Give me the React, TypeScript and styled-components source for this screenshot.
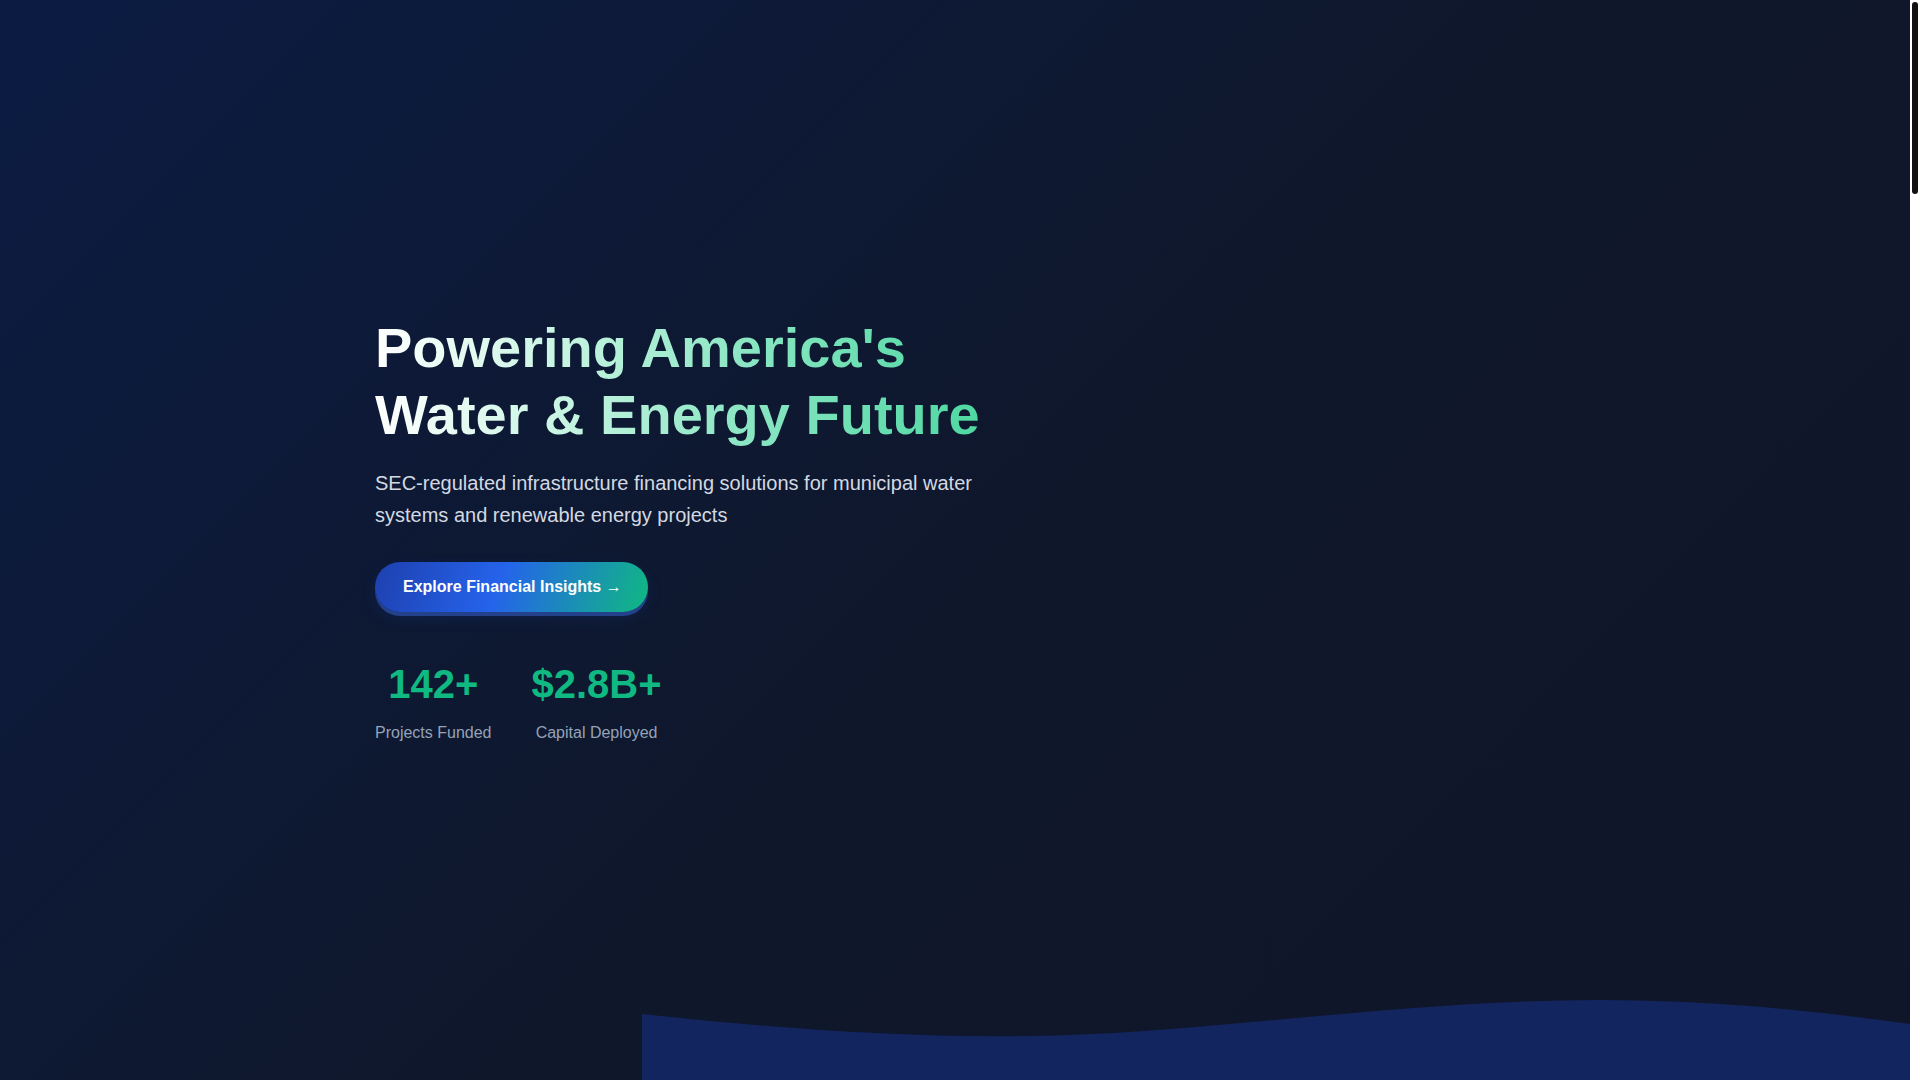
import styled, { createGlobalStyle } from "styled-components";

const GlobalStyle = createGlobalStyle`
  * {
    box-sizing: border-box;
  }

  html,
  body {
    margin: 0;
    padding: 0;
    height: 100%;
    overflow: hidden;
    background: #0f172a;
    font-family: "Liberation Sans", Arial, sans-serif;
  }
`;

// Main scroll area + a slim drawn scroll rail beside it
const Viewport = styled.div`
  display: flex;
  height: 100vh;
`;

const Main = styled.main`
  flex: 1;
  min-width: 0;
  overflow-y: auto;
  scrollbar-width: none;

  &::-webkit-scrollbar {
    display: none;
  }
`;

const ScrollRail = styled.div`
  width: 10px;
  flex-shrink: 0;
  padding: 2px;
  background: #ffffff;
`;

const ScrollThumb = styled.div`
  height: 192px;
  border-radius: 3px;
  background: #111111;
`;

const Hero = styled.section`
  position: relative;
  height: 100vh;
  display: flex;
  align-items: center;
  padding-bottom: 21px;
  overflow: hidden;
  background: linear-gradient(135deg, #0b1b42 0%, #0f172a 55%, #10162a 100%);
`;

const Container = styled.div`
  width: 100%;
  max-width: 1200px;
  margin: 0 auto;
  padding: 0 20px;
  position: relative;
  z-index: 1;
`;

const Content = styled.div`
  display: flex;
  flex-direction: column;
  align-items: flex-start;
`;

const Title = styled.h1`
  margin: 0 0 19px;
  font-size: 3.5rem;
  font-weight: 700;
  line-height: 1.2;
  background: linear-gradient(90deg, #ffffff 0%, #c9f5e3 30%, #8ce6c4 60%, #4fd8a2 100%);
  -webkit-background-clip: text;
  background-clip: text;
  color: transparent;
`;

const Subtitle = styled.p`
  margin: 0 0 31px;
  max-width: 600px;
  font-size: 1.25rem;
  line-height: 1.6;
  color: #d3d9e2;
`;

const CtaButton = styled.a`
  display: inline-block;
  padding: 1rem 1.65rem 1rem 1.75rem;
  border-radius: 50px;
  font-size: 1rem;
  font-weight: 700;
  line-height: 1.15;
  color: #ffffff;
  text-decoration: none;
  cursor: pointer;
  background: linear-gradient(110deg, #1e40af 0%, #2563eb 45%, #10b981 100%);
  box-shadow: 0 4px 0 #24428c, 0 6px 16px rgba(37, 99, 235, 0.12);
`;

const Stats = styled.div`
  display: flex;
  gap: 40px;
  margin-top: 48px;
`;

const Stat = styled.div`
  display: flex;
  flex-direction: column;
  align-items: center;
  text-align: center;
`;

const StatNumber = styled.div`
  font-size: 2.5rem;
  font-weight: 700;
  line-height: 1.2;
  color: #10b981;
`;

const StatLabel = styled.div`
  margin-top: 13px;
  font-size: 1rem;
  line-height: 1.5;
  color: #94a3b8;
`;

const Wave = styled.svg`
  position: absolute;
  bottom: 0;
  right: 0;
  width: 1268px;
  height: 80px;
  display: block;
`;

const NextSection = styled.section`
  min-height: 4920px;
  background: #13255e;
`;

const stats = [
  { value: "142+", label: "Projects Funded" },
  { value: "$2.8B+", label: "Capital Deployed" },
];

const App = () => {
  return (
    <Viewport>
      <GlobalStyle />
      <Main>
        <Hero>
          <Container>
            <Content>
              <Title>
                Powering America's
                <br />
                Water &amp; Energy Future
              </Title>
              <Subtitle>
                SEC-regulated infrastructure financing solutions for municipal water systems and renewable energy
                projects
              </Subtitle>
              <CtaButton href="#insights">Explore Financial Insights →</CtaButton>
              <Stats>
                {stats.map((stat) => (
                  <Stat key={stat.label}>
                    <StatNumber>{stat.value}</StatNumber>
                    <StatLabel>{stat.label}</StatLabel>
                  </Stat>
                ))}
              </Stats>
            </Content>
          </Container>
          <Wave viewBox="0 0 1268 80" preserveAspectRatio="none" aria-hidden="true">
            <path
              d="M0,14 C130,28 260,38 387,36 C560,34 760,0 955,0 C1080,0 1180,12 1268,24 L1268,80 L0,80 Z"
              fill="#13255e"
            />
          </Wave>
        </Hero>
        <NextSection id="insights" />
      </Main>
      <ScrollRail>
        <ScrollThumb />
      </ScrollRail>
    </Viewport>
  );
};

export default App;
